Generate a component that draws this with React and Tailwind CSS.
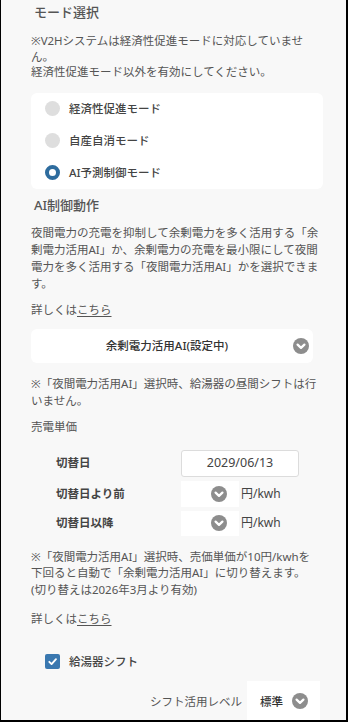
import React from "react";

const Chevron = ({ size = 16 }) => (
  <svg width={size} height={size} viewBox="0 0 16 16" className="shrink-0">
    <circle cx="8" cy="8" r="8" fill="#8d8d8d" />
    <path d="M4.6 6.6 L8 9.8 L11.4 6.6" fill="none" stroke="#fff" strokeWidth="2.3" strokeLinecap="round" strokeLinejoin="round" />
  </svg>
);

const Radio = ({ checked, label }) => (
  <div className="flex items-center h-[32px] pl-[14px]">
    {checked ? (
      <span className="w-[15px] h-[15px] rounded-full border-[4px] border-[#2e6c9e] bg-white" />
    ) : (
      <span className="w-[15px] h-[15px] rounded-full bg-[#dedede]" />
    )}
    <span className="ml-[9px] text-[11.5px] font-medium text-[#444]">{label}</span>
  </div>
);

const Link = () => (
  <p className="text-[11.5px] leading-[17px] text-[#555]">
    詳しくは<span className="underline underline-offset-2">こちら</span>
  </p>
);

export default function App() {
  return (
    <div
      className="h-[722px] w-[348px] overflow-hidden bg-[#f8f8f8] border-l border-r-2 border-b-2 border-black"
      style={{ fontFamily: '"Noto Sans", "Noto Sans CJK JP", sans-serif' }}
    >
      <div className="pl-[30px] pr-[23px] pt-[3px] flex flex-col text-[#555]">
        <h2 className="pl-[3px] text-[13px] leading-[18px] font-medium text-[#555]">モード選択</h2>
        <p className="mt-[12px] text-[11.5px] leading-[15.5px]">
          ※V2Hシステムは経済性促進モードに対応していません。
          <br />
          経済性促進モード以外を有効にしてください。
        </p>

        <div className="mt-[13px] bg-white rounded-[6px] flex flex-col">
          <Radio label="経済性促進モード" />
          <Radio label="自産自消モード" />
          <Radio checked label="AI予測制御モード" />
        </div>

        <h2 className="mt-[7px] pl-[3px] text-[13px] leading-[18px] font-medium text-[#555]">AI制御動作</h2>
        <p className="mt-[10px] text-[11.5px] leading-[17px]">
          夜間電力の充電を抑制して余剰電力を多く活用する「余剰電力活用AI」か、余剰電力の充電を最小限にして夜間電力を多く活用する「夜間電力活用AI」かを選択できます。
        </p>
        <div className="mt-[9px]">
          <Link />
        </div>

        <div className="mt-[11px] mr-[10px] h-[34px] bg-white rounded-[6px] flex items-center relative">
          <span className="flex-1 text-center text-[11.5px] font-medium text-[#333] pr-[10px]">余剰電力活用AI(設定中)</span>
          <span className="absolute right-[4px]">
            <Chevron />
          </span>
        </div>

        <p className="mt-[12px] text-[11.5px] leading-[17px]">
          ※「夜間電力活用AI」選択時、給湯器の昼間シフトは行いません。
        </p>
        <p className="mt-[9px] text-[11.5px] leading-[17px]">売電単価</p>

        <div className="mt-[15px] flex flex-col gap-[4px]">
          <div className="flex items-center">
            <span className="w-[150px] pl-[25px] text-[11.5px] font-bold text-[#444]">切替日</span>
            <div className="w-[118px] h-[27px] bg-white border border-[#dcdcdc] rounded-[3px] flex items-center justify-center text-[12.5px] text-[#444]">
              2029/06/13
            </div>
          </div>
          <div className="flex items-center">
            <span className="w-[150px] pl-[25px] text-[11.5px] font-bold text-[#444]">切替日より前</span>
            <div className="w-[58px] h-[26px] bg-white flex items-center justify-end pr-[12px]">
              <Chevron />
            </div>
            <span className="ml-[2px] text-[12px] text-[#444]">円/kwh</span>
          </div>
          <div className="flex items-center">
            <span className="w-[150px] pl-[25px] text-[11.5px] font-bold text-[#444]">切替日以降</span>
            <div className="w-[58px] h-[25px] bg-white flex items-center justify-end pr-[12px]">
              <Chevron />
            </div>
            <span className="ml-[2px] text-[12px] text-[#444]">円/kwh</span>
          </div>
        </div>

        <p className="mt-[13px] text-[11.5px] leading-[16.5px]">
          ※「夜間電力活用AI」選択時、売価単価が10円/kwhを
          <br />
          下回ると自動で「余剰電力活用AI」に切り替えます。
          <br />
          (切り替えは2026年3月より有効)
        </p>
        <div className="mt-[12px]">
          <Link />
        </div>

        <div className="mt-[26px] flex items-center pl-[14px]">
          <span className="w-[15px] h-[15px] rounded-[2px] bg-[#3a78b0] flex items-center justify-center">
            <svg width="11" height="11" viewBox="0 0 12 12">
              <path d="M2.5 6.3 L5 8.8 L9.8 3.4" fill="none" stroke="#fff" strokeWidth="2" strokeLinecap="round" strokeLinejoin="round" />
            </svg>
          </span>
          <span className="ml-[9px] text-[11.5px] font-medium text-[#444]">給湯器シフト</span>
        </div>

        <div className="mt-[11px] flex items-center justify-end pr-[3px]">
          <span className="text-[11.5px] text-[#555] mr-[5px]">シフト活用レベル</span>
          <div className="w-[73px] h-[40px] bg-white flex items-center justify-between pl-[13px] pr-[12px]">
            <span className="text-[11.5px] font-medium text-[#333]">標準</span>
            <Chevron />
          </div>
        </div>
      </div>
    </div>
  );
}
